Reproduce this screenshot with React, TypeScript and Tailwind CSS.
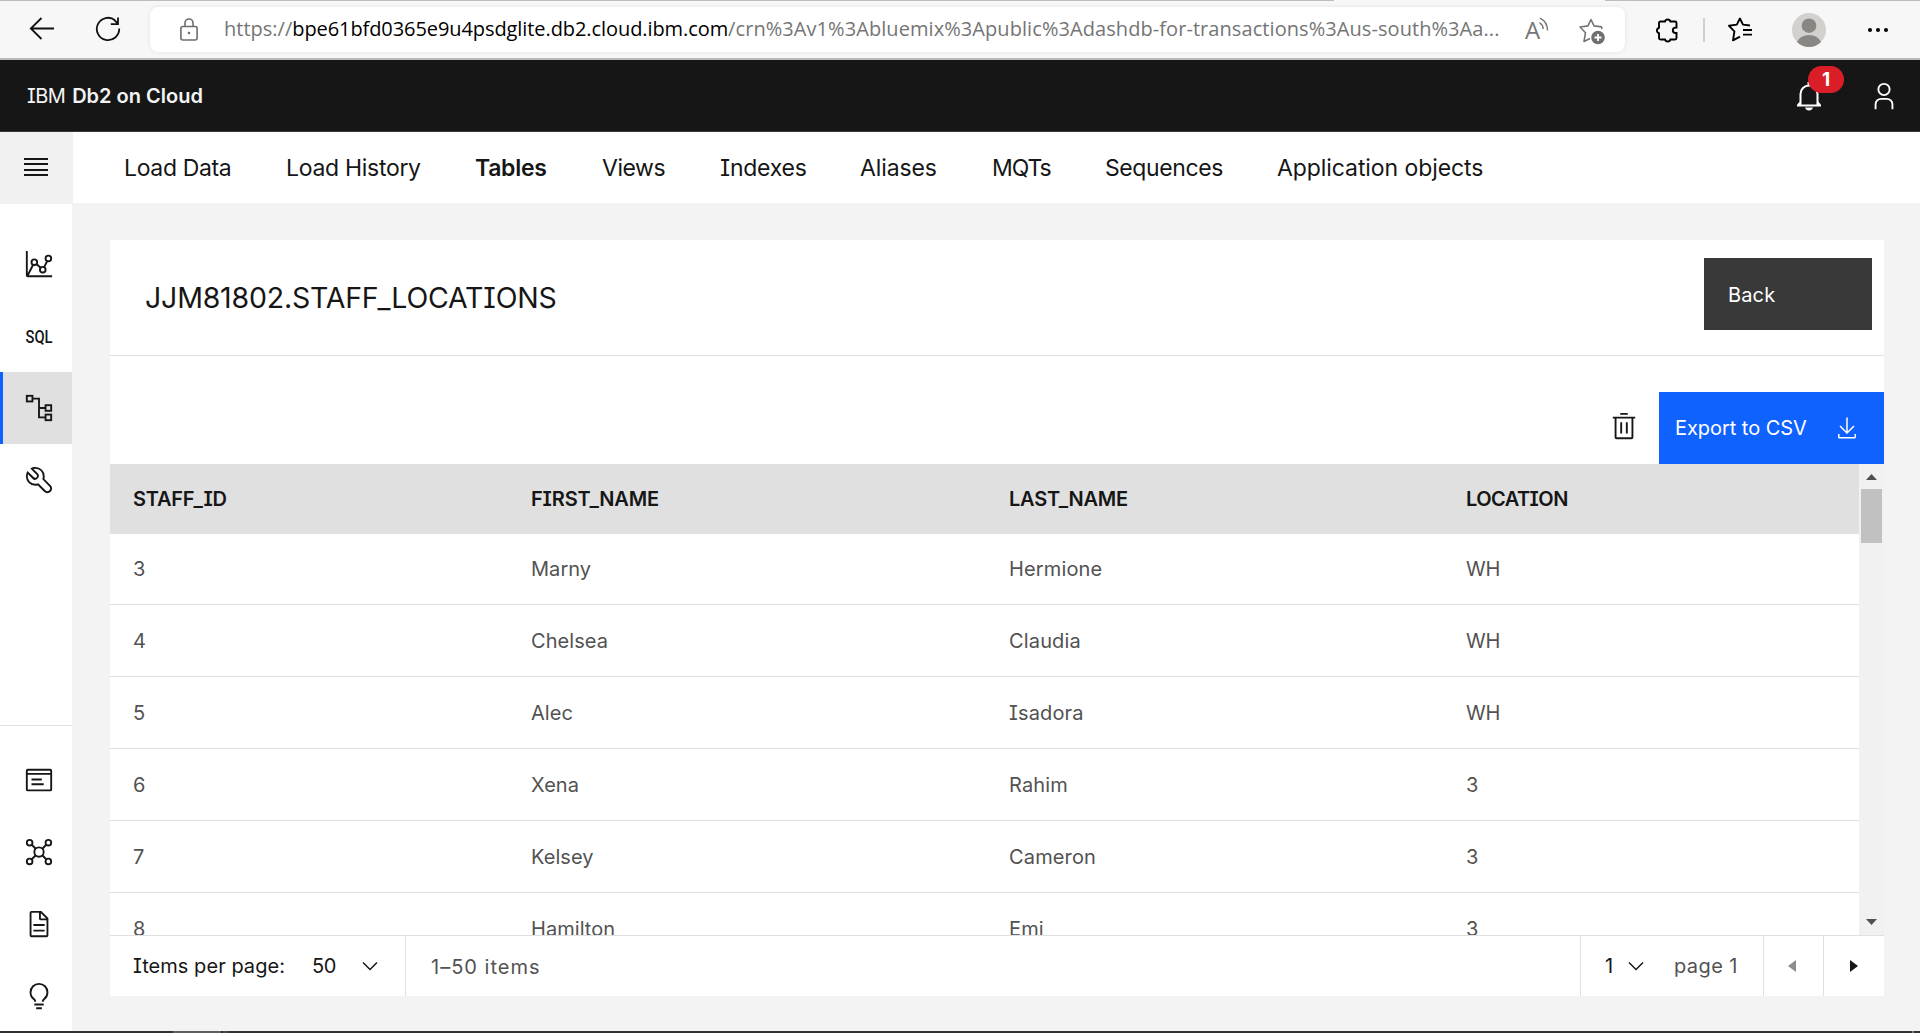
import React from "react";

const INK = "#161616";

function Carbon({ d, size = 30, fill = INK, box = 32 }: { d: string; size?: number; fill?: string; box?: number }) {
  return (
    <svg width={size} height={size} viewBox={`0 0 ${box} ${box}`} fill={fill} className="block shrink-0">
      <path d={d} />
    </svg>
  );
}

function Line({ size = 30, box = 32, stroke = INK, width = 2, children }: { size?: number; box?: number; stroke?: string; width?: number; children: React.ReactNode }) {
  return (
    <svg width={size} height={size} viewBox={`0 0 ${box} ${box}`} fill="none" stroke={stroke} strokeWidth={width} className="block shrink-0">
      {children}
    </svg>
  );
}

const PATHS = {
  tools:
    "M12.1,2A9.8,9.8,0,0,0,6.7,3.6L13.1,10a2.1,2.1,0,0,1,.2,3,2.1,2.1,0,0,1-3-.2L3.7,6.4A9.84,9.84,0,0,0,2,12.1,10.14,10.14,0,0,0,12.1,22.2a10.9,10.9,0,0,0,2.6-.3l6.7,6.7a5,5,0,0,0,7.1-7.1l-6.7-6.7a10.9,10.9,0,0,0,.3-2.6A10,10,0,0,0,12.1,2Zm8,10.1a7.61,7.61,0,0,1-.3,2.1l-.3,1.1.8.8,6.7,6.7a2.88,2.88,0,0,1,.9,2.1A2.72,2.72,0,0,1,27,27a2.9,2.9,0,0,1-4.2,0l-6.7-6.7-.8-.8-1.1.3a7.61,7.61,0,0,1-2.1.3,8.27,8.27,0,0,1-5.7-2.3A7.63,7.63,0,0,1,4,12.1a8.33,8.33,0,0,1,.3-2.2l4.4,4.4a4.14,4.14,0,0,0,5.9.2,4.14,4.14,0,0,0-.2-5.9L10,4.2a6.45,6.45,0,0,1,2-.3,8.27,8.27,0,0,1,5.7,2.3A8.49,8.49,0,0,1,20.1,12.1Z",
  document:
    "M25.7 9.3l-7-7A.9.9 0 0 0 18 2H8A2 2 0 0 0 6 4V28a2 2 0 0 0 2 2H24a2 2 0 0 0 2-2V10A.9.9 0 0 0 25.7 9.3ZM18 4.4 23.6 10H18ZM24 28H8V4h8v6a2 2 0 0 0 2 2h6ZM10 22H22V24H10zM10 16H22V18H10z",
  idea:
    "M11 24H21V26H11zM13 28H19V30H13zM16 2A10 10 0 0 0 6 12a9.19 9.19 0 0 0 3.46 7.62c1 .93 1.54 1.46 1.54 2.38h2c0-1.84-1.11-2.87-2.19-3.86A7.2 7.2 0 0 1 8 12a8 8 0 0 1 16 0 7.2 7.2 0 0 1-2.82 6.14c-1.07 1-2.18 2-2.18 3.86h2c0-.92.53-1.45 1.54-2.39A9.18 9.18 0 0 0 26 12 10 10 0 0 0 16 2Z",
  trash:
    "M12 12H14V24H12zM18 12H20V24H18zM4 6V8H6V28a2 2 0 0 0 2 2H24a2 2 0 0 0 2-2V8h2V6zM8 28V8H24V28zM12 2H20V4H12z",
  user:
    "M16 4a5 5 0 1 1-5 5 5 5 0 0 1 5-5m0-2a7 7 0 1 0 7 7A7 7 0 0 0 16 2zM26 30H24V25a5 5 0 0 0-5-5H13a5 5 0 0 0-5 5v5H6V25a7 7 0 0 1 7-7h6a7 7 0 0 1 7 7z",
  download:
    "M13 7L12.3 6.3 8.5 10.1 8.5 1 7.5 1 7.5 10.1 3.7 6.3 3 7 8 12zM13 12v2H3v-2H2v2c0 .6.4 1 1 1h10c.6 0 1-.4 1-1v-2z",
  chevron: "M8 11L3 6 3.7 5.3 8 9.6 12.3 5.3 13 6z",
};

function BrowserBar() {
  return (
    <div className="flex h-[60px] shrink-0 flex-col bg-[#f7f7f7]">
      <div className="flex h-px shrink-0 justify-between">
        <div className="w-[1334px] bg-[#bdbdbd]" />
        <div className="w-[315px] bg-[#bdbdbd]" />
      </div>
      <div className="flex h-[57px] items-start">
        <div className="flex w-[150px] shrink-0 gap-[40px] pl-[29px] pt-[15px]">
          <Line size={26} box={26} stroke="#111" width={1.8}>
            <path d="M25 12.500H2M12.500 2 1.800 12.500 12.500 23" />
          </Line>
          <Line size={26} box={26} stroke="#111" width={1.8}>
            <path d="M20.200 4.400A11.200 11.200 0 1 0 24.200 12.500M23 1.500V8.200H15.800M23 7.500 19 3.800" />
          </Line>
        </div>
        <div className="mt-1.5 flex h-[45px] w-[1475px] shrink-0 items-center rounded-lg bg-white pl-[30px] shadow-[0_0_4px_rgba(0,0,0,0.09)]">
          <svg width="18" height="24" viewBox="0 0 18 24" fill="none" stroke="#6e6e6e" strokeWidth="1.600" className="block shrink-0">
            <rect x="0.900" y="8.500" width="16.200" height="13.500" rx="2" />
            <path d="M5 8.500V5a4 4 0 0 1 8 0V8.500" />
            <circle cx="9" cy="15" r="1.300" fill="#6e6e6e" stroke="none" />
          </svg>
          <div className="ml-[26px] flex w-[1280px] whitespace-pre pb-0.5 font-['Open_Sans',sans-serif] text-[20px] leading-[30px] text-[#757575]">
            <span>https://</span>
            <span className="tracking-[-0.08px] text-black">bpe61bfd0365e9u4psdglite.db2.cloud.ibm.com</span>
            <span className="tracking-[0.07px]">/crn%3Av1%3Abluemix%3Apublic%3Adashdb-for-transactions%3Aus-south%3Aa...</span>
          </div>
          <svg width="26" height="30" viewBox="0 -2 26 30" fill="none" stroke="#757575" strokeWidth="1.500" className="ml-[21px] block overflow-visible">
            <text x="0" y="21.500" fontFamily="Open Sans" fontWeight="400" fontSize="24" fill="#757575" stroke="none">A</text>
            <path d="M14.500 5.500Q18 8 18.200 12M15 1.200Q22.500 5 22.500 13.500" />
          </svg>
          <svg width="28" height="28" viewBox="0 0 28 28" fill="none" stroke="#757575" strokeWidth="1.600" strokeLinejoin="round" className="ml-[28px] mt-1 block">
            <path d="M23 11 22.500 8.900 15 7.900 12 1.500 9 7.900 1 9 6.500 14.700 5 23.500 11 20.500" />
            <circle cx="19" cy="19.500" r="6.800" fill="#6e6e6e" stroke="none" />
            <path d="M19 16v7M15.500 19.500h7" stroke="#fff" strokeWidth="1.800" />
          </svg>
        </div>
        <div className="flex h-[57px] flex-1 items-center pl-[30px]">
          <svg width="24" height="26" viewBox="0 -1 24 26" fill="none" stroke="#000" strokeWidth="1.900" className="block">
            <path d="M10 3.500a2.800 2.800 0 0 1 5.400 0H20a1.500 1.500 0 0 1 1.500 1.500V9.600h-1a2.700 2.700 0 0 0 0 5.400h1V20a1.500 1.500 0 0 1-1.500 1.500H15.400a2.800 2.800 0 0 1-5.400 0H5.500A1.500 1.500 0 0 1 4 20V15.200a2.800 2.800 0 0 1 0-5.400V5A1.500 1.500 0 0 1 5.500 3.500z" />
          </svg>
          <div className="ml-6 h-6 w-0.5 bg-[#d0d0d0]" />
          <svg width="25" height="25" viewBox="0 0 25 25" fill="none" stroke="#000" strokeWidth="1.900" strokeLinejoin="round" className="ml-[23px] block">
            <path d="M22 8.500 15 7.600 11.900 1.500 8.800 7.600 1 8.800 6.400 14.300 5 23.300 12 19.600M15 13h9M15 17.600h9" />
          </svg>
          <svg width="34" height="34" viewBox="0 0 34 34" className="ml-[39px] block">
            <circle cx="17" cy="17" r="17" fill="#d3d1cd" />
            <circle cx="17" cy="12.700" r="7.300" fill="#8a8683" />
            <path d="M5 29Q8.500 22 17 22T29 29Q24 34 17 34T5 29z" fill="#8a8683" />
          </svg>
          <svg width="22" height="4" viewBox="0 0 22 4" className="ml-[41px] block">
            <circle cx="3" cy="2" r="2" /><circle cx="11" cy="2" r="2" /><circle cx="19" cy="2" r="2" />
          </svg>
        </div>
      </div>
      <div className="h-0.5 bg-[#b9b9b9]" />
    </div>
  );
}

function Header() {
  return (
    <header className="flex h-[72px] shrink-0 items-center border-b border-[#393939] bg-[#161616] pl-[27px] pr-[21px] text-[20px] text-[#f4f4f4]">
      <span className="tracking-[-0.6px]">IBM</span>
      <span className="ml-[7px] font-semibold">Db2 on Cloud</span>
      <div className="relative ml-auto mr-[45px]">
        <Line size={30} box={30} stroke="#fff" width={2}>
          <path d="M14.500 1V4M6.500 24V13a8.500 8.500 0 0 1 17 0V24M3 24.500h24" />
          <path d="M4 24 6.500 21.500M26 24 23.500 21.500" />
          <path d="M11 26.500h8q-1 3-4 3t-4-3z" fill="#fff" stroke="none" />
        </Line>
        <div className="absolute -top-[15px] left-[14px] flex h-[27px] w-9 items-center justify-center rounded-full bg-[#da1e28] text-[19px] font-bold leading-none text-white">1</div>
      </div>
      <Carbon d={PATHS.user} fill="#fff" />
    </header>
  );
}

function SideItem({ children, active }: { children: React.ReactNode; active?: boolean }) {
  return (
    <div className={active ? "flex h-[72px] items-center border-l-[3px] border-[#0f62fe] bg-[#e0e0e0] pl-[21px]" : "flex h-[72px] items-center pl-6"}>
      {children}
    </div>
  );
}

function Sidebar() {
  return (
    <aside className="flex w-[73px] shrink-0 flex-col border-r border-[#f1f1f1] bg-white">
      <div className="flex h-[72px] flex-col justify-center gap-[3.500px] bg-[#f1f1f1] pb-2 pl-6">
        <div className="mt-1.5 h-0.5 w-6 bg-[#161616]" />
        <div className="h-0.5 w-6 bg-[#161616]" />
        <div className="h-0.5 w-6 bg-[#161616]" />
        <div className="h-0.5 w-6 bg-[#161616]" />
      </div>
      <div className="pt-6">
        <SideItem>
          <Line>
            <path d="M3 2V28a1 1 0 0 0 1 1H30M4 28 9.700 16.800M13.200 16 17.800 20M21.500 19.400 24.800 12.800" />
            <circle cx="11" cy="14" r="3" /><circle cx="20" cy="22" r="3" /><circle cx="26" cy="10" r="3" />
          </Line>
        </SideItem>
        <SideItem>
          <svg width="30" height="34" viewBox="0 -2 30 34" className="block overflow-visible">
            <text x="1.500" y="21.500" fontFamily="Roboto" fontWeight="500" fontSize="18.500" fill={INK} textLength="27" lengthAdjust="spacingAndGlyphs">SQL</text>
          </svg>
        </SideItem>
        <SideItem active>
          <Line>
            <rect x="3" y="3" width="6" height="6" /><rect x="23" y="13" width="6" height="6" /><rect x="23" y="23" width="6" height="6" />
            <path d="M9 6H16V26H23M16 16H23" />
          </Line>
        </SideItem>
        <SideItem><Carbon d={PATHS.tools} /></SideItem>
      </div>
      <div className="-mb-px mt-auto border-t border-[#e0e0e0] pt-[18px]">
        <SideItem>
          <Line>
            <rect x="3" y="5" width="26" height="22" rx="1" />
            <path d="M3 9.500H29M8 15.500H19M8 20.500H21" />
          </Line>
        </SideItem>
        <SideItem>
          <Line>
            <circle cx="16" cy="16" r="5" /><circle cx="6" cy="6" r="3" /><circle cx="26" cy="6" r="3" /><circle cx="6" cy="26" r="3" /><circle cx="26" cy="26" r="3" />
            <path d="M8 8 12.500 12.500M24 8 19.500 12.500M8 24 12.500 19.500M24 24 19.500 19.500" />
          </Line>
        </SideItem>
        <SideItem><Carbon d={PATHS.document} /></SideItem>
        <SideItem><Carbon d={PATHS.idea} /></SideItem>
      </div>
    </aside>
  );
}

const TABS: [string, string][] = [
  ["Load Data", "w-[162px] tracking-[-0.35px]"],
  ["Load History", "w-[189px] tracking-[-0.3px]"],
  ["Tables", "w-[127px] tracking-[-0.3px] font-semibold"],
  ["Views", "w-[118px] tracking-[-0.45px]"],
  ["Indexes", "w-[140px] tracking-[-0.25px]"],
  ["Aliases", "w-[132px] tracking-[-0.1px]"],
  ["MQTs", "w-[113px] tracking-[-1.1px]"],
  ["Sequences", "w-[172px] tracking-[-0.4px]"],
  ["Application objects", "w-[220px] tracking-[-0.08px]"],
];

const ROWS = [
  ["3", "Marny", "Hermione", "WH"],
  ["4", "Chelsea", "Claudia", "WH"],
  ["5", "Alec", "Isadora", "WH"],
  ["6", "Xena", "Rahim", "3"],
  ["7", "Kelsey", "Cameron", "3"],
  ["8", "Hamilton", "Emi", "3"],
];

const CELL = ["tracking-normal", "tracking-[0.05px]", "tracking-[0.15px]", "tracking-[-0.3px]"];

const GRID = "grid grid-cols-[398px_478px_457px_1fr] items-center pl-[23px]";

function DataTable() {
  return (
    <div className="flex h-[471px] overflow-hidden">
      <div className="flex-1">
        <div className={`${GRID} h-[70px] bg-[#e0e0e0] font-semibold text-[#161616]`}>
          <span className="tracking-[-0.25px]">STAFF_ID</span>
          <span className="tracking-[-0.15px]">FIRST_NAME</span>
          <span className="tracking-[-0.25px]">LAST_NAME</span>
          <span className="tracking-[-0.55px]">LOCATION</span>
        </div>
        {ROWS.map((r, i) => (
          <div key={r[0]} className={`${GRID} border-b border-[#e0e0e0] text-[#525252] ${i === 0 ? "h-[71px]" : "h-[72px]"}`}>
            {r.map((c, j) => <span key={j} className={CELL[j]}>{c}</span>)}
          </div>
        ))}
      </div>
      <div className="flex w-[25px] flex-col items-center bg-[#f1f1f1]">
        <svg width="11" height="6" viewBox="0 0 11 6" className="mt-2.5 block" fill="#505050"><path d="M0 6 5.500 0 11 6z" /></svg>
        <div className="mt-[9px] h-[54px] w-[21px] bg-[#c1c1c1]" />
        <svg width="11" height="6" viewBox="0 0 11 6" className="mb-2.5 mt-auto block" fill="#505050"><path d="M0 0 5.500 6 11 0z" /></svg>
      </div>
    </div>
  );
}

function Pagination() {
  return (
    <div className="flex h-[61px] border-t border-[#e0e0e0] leading-[61px]">
      <div className="flex w-[296px] items-center border-r border-[#e0e0e0] pl-[23px] text-[#161616]">
        <span className="w-[179px] pt-px tracking-[0.05px]">Items per page:</span>
        <span className="w-[46px] pt-px tracking-[-0.3px]">50</span>
        <Carbon d={PATHS.chevron} box={16} size={24} />
      </div>
      <span className="pl-[25px] pt-px tracking-[1px] text-[#525252]">1–50 items</span>
      <div className="ml-auto flex w-[184px] items-center border-x border-[#e0e0e0] pl-6 text-[#161616]">
        <span className="w-[19px] pt-px">1</span>
        <Carbon d={PATHS.chevron} box={16} size={24} />
        <span className="ml-[26px] pt-px tracking-[0.4px] text-[#525252]">page 1</span>
      </div>
      <div className="flex w-[60px] items-center justify-center border-r border-[#e0e0e0] pr-[3px]">
        <svg width="8" height="12" viewBox="0 0 8 12" fill="#8d8d8d"><path d="M8 0V12L0 6z" /></svg>
      </div>
      <div className="flex w-[60px] items-center justify-center">
        <svg width="8" height="12" viewBox="0 0 8 12" fill={INK}><path d="M0 0V12L8 6z" /></svg>
      </div>
    </div>
  );
}

export default function App() {
  return (
    <div className="flex h-[1033px] w-[1920px] flex-col overflow-hidden bg-[#f3f3f3] font-[Inter,sans-serif] text-[20px] [font-feature-settings:'cv08']">
      <BrowserBar />
      <Header />
      <div className="flex min-h-0 flex-1">
        <Sidebar />
        <main className="flex-1">
          <nav className="flex h-[71px] items-center bg-white pl-[51px] pt-0.5 text-[23px] text-[#161616]">
            {TABS.map(([label, cls]) => <span key={label} className={`whitespace-nowrap ${cls}`}>{label}</span>)}
          </nav>
          <section className="ml-[37px] mt-[37px] w-[1774px] bg-white">
            <div className="flex h-[116px] items-start justify-between border-b border-[#e0e0e0] pl-[35px] pr-3">
              <h1 className="pt-[38px] text-[28.500px] leading-10 tracking-[-0.2px] text-[#161616]">JJM81802.STAFF_LOCATIONS</h1>
              <button className="mt-[18px] h-[72px] w-[168px] bg-[#393939] pl-6 pt-0.5 text-left tracking-[0.15px] text-white">Back</button>
            </div>
            <div className="flex h-[108px] items-end justify-end">
              <div className="mb-[23px] mr-5"><Carbon d={PATHS.trash} /></div>
              <button className="flex h-[72px] w-[225px] items-center justify-between bg-[#0f62fe] pl-4 pr-[25px] tracking-[-0.05px] text-white">
                Export to CSV
                <Carbon d={PATHS.download} box={16} size={24} fill="#fff" />
              </button>
            </div>
            <DataTable />
            <Pagination />
          </section>
        </main>
      </div>
      <div className="flex h-0.5 shrink-0 bg-[#333133]">
        <div className="ml-[173px] h-0.5 w-[48px] bg-[#5f5d5f]" />
        <div className="ml-0.5 h-0.5 w-[5px] bg-[#4a484a]" />
        <div className="ml-auto mr-[6px] h-0.5 w-0.5 bg-[#777]" />
      </div>
    </div>
  );
}
